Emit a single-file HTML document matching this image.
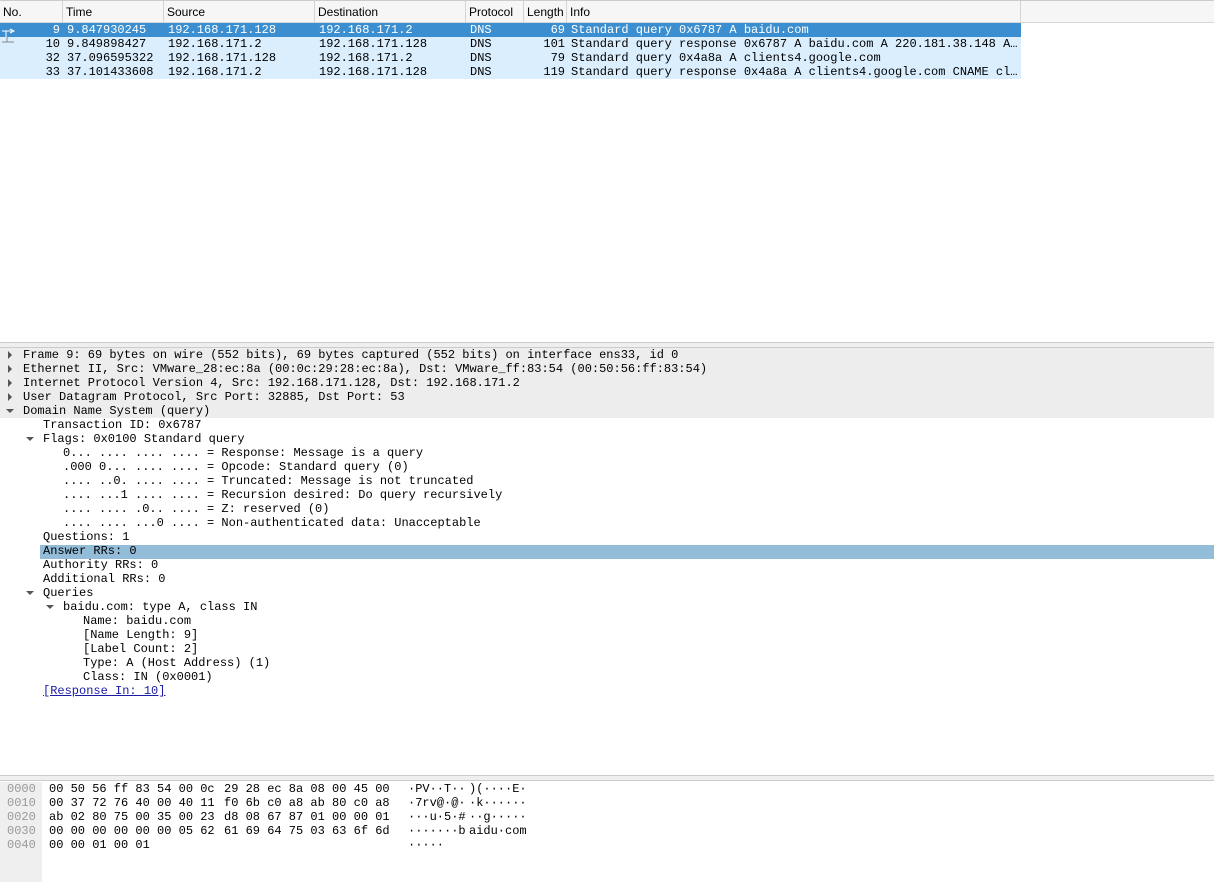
<!DOCTYPE html>
<html><head><meta charset="utf-8"><style>
*{margin:0;padding:0;box-sizing:border-box}
body{width:1214px;height:882px;background:#fff;position:relative;overflow:hidden;font-family:"Liberation Mono",monospace;font-size:12px;color:#000}
.a{position:absolute;white-space:pre;line-height:14px}
.hdr{position:absolute;left:0;top:0;width:1214px;height:23px;background:#f6f6f6;border-top:1px solid #ccc;border-bottom:1px solid #d8d8d8;font-family:"Liberation Sans",sans-serif;font-size:12px}
.hdr div{position:absolute;top:0;height:22px;line-height:22px;padding-left:3px;border-right:1px solid #d4d4d4}
.row{position:absolute;left:0;width:1021px;height:14px;background:#daeefe}
.sel{background:#3b8fd0;color:#fff}
.tl{position:absolute;left:0;width:1214px;height:14px;background:#ededed}
.tri{position:absolute;width:0;height:0}
.r{border-left:4px solid #555;border-top:4px solid transparent;border-bottom:4px solid transparent}
.d{border-top:4px solid #555;border-left:4px solid transparent;border-right:4px solid transparent}
.split{position:absolute;left:0;width:1214px;height:6px;background:#efefef;border-top:1px solid #ccc;border-bottom:1px solid #ccc}
.n{position:absolute;width:60px;text-align:right;left:0}
.l{position:absolute;width:565px;text-align:right;left:0}
</style></head><body>
<div class="hdr">
<div style="left:0;width:63px">No.</div>
<div style="left:63px;width:101px">Time</div>
<div style="left:164px;width:151px">Source</div>
<div style="left:315px;width:151px">Destination</div>
<div style="left:466px;width:58px">Protocol</div>
<div style="left:524px;width:43px">Length</div>
<div style="left:567px;width:454px">Info</div>
</div>
<div class="row sel" style="top:23px"></div>
<div class="row" style="top:37px"></div>
<div class="row" style="top:51px"></div>
<div class="row" style="top:65px"></div>
<svg style="position:absolute;left:0;top:26px" width="18" height="22"><path d="M2 5H12M6 5V11M10 3L14 5L10 7" stroke="#fff" fill="none"/><path d="M2 16H14M7 10V16" stroke="#888" fill="none"/></svg>

<div class="a" style="top:23px;left:0;width:1021px;height:14px;color:#fff"><span class="n">9</span><span style="position:absolute;left:67px">9.847930245</span><span style="position:absolute;left:168px">192.168.171.128</span><span style="position:absolute;left:319px">192.168.171.2</span><span style="position:absolute;left:470px">DNS</span><span class="l">69</span><span style="position:absolute;left:571px">Standard query 0x6787 A baidu.com</span></div>
<div class="a" style="top:37px;left:0;width:1021px;height:14px"><span class="n">10</span><span style="position:absolute;left:67px">9.849898427</span><span style="position:absolute;left:168px">192.168.171.2</span><span style="position:absolute;left:319px">192.168.171.128</span><span style="position:absolute;left:470px">DNS</span><span class="l">101</span><span style="position:absolute;left:571px">Standard query response 0x6787 A baidu.com A 220.181.38.148 A…</span></div>
<div class="a" style="top:51px;left:0;width:1021px;height:14px"><span class="n">32</span><span style="position:absolute;left:67px">37.096595322</span><span style="position:absolute;left:168px">192.168.171.128</span><span style="position:absolute;left:319px">192.168.171.2</span><span style="position:absolute;left:470px">DNS</span><span class="l">79</span><span style="position:absolute;left:571px">Standard query 0x4a8a A clients4.google.com</span></div>
<div class="a" style="top:65px;left:0;width:1021px;height:14px"><span class="n">33</span><span style="position:absolute;left:67px">37.101433608</span><span style="position:absolute;left:168px">192.168.171.2</span><span style="position:absolute;left:319px">192.168.171.128</span><span style="position:absolute;left:470px">DNS</span><span class="l">119</span><span style="position:absolute;left:571px">Standard query response 0x4a8a A clients4.google.com CNAME cl…</span></div>

<div class="split" style="top:342px"></div>
<div class="tl" style="top:348px"></div><div class="tl" style="top:362px"></div><div class="tl" style="top:376px"></div><div class="tl" style="top:390px"></div><div class="tl" style="top:404px"></div>
<div style="position:absolute;left:40px;top:545px;width:1174px;height:14px;background:#93bcd9"></div>
<div class="tri r" style="left:8px;top:351px"></div>
<div class="tri r" style="left:8px;top:365px"></div>
<div class="tri r" style="left:8px;top:379px"></div>
<div class="tri r" style="left:8px;top:393px"></div>
<div class="tri d" style="left:6px;top:409px"></div>
<div class="tri d" style="left:26px;top:437px"></div>
<div class="tri d" style="left:26px;top:591px"></div>
<div class="tri d" style="left:46px;top:605px"></div>
<div class="a" style="left:23px;top:348px">Frame 9: 69 bytes on wire (552 bits), 69 bytes captured (552 bits) on interface ens33, id 0
Ethernet II, Src: VMware_28:ec:8a (00:0c:29:28:ec:8a), Dst: VMware_ff:83:54 (00:50:56:ff:83:54)
Internet Protocol Version 4, Src: 192.168.171.128, Dst: 192.168.171.2
User Datagram Protocol, Src Port: 32885, Dst Port: 53
Domain Name System (query)</div>
<div class="a" style="left:43px;top:418px">Transaction ID: 0x6787
Flags: 0x0100 Standard query</div>
<div class="a" style="left:63px;top:446px">0... .... .... .... = Response: Message is a query
.000 0... .... .... = Opcode: Standard query (0)
.... ..0. .... .... = Truncated: Message is not truncated
.... ...1 .... .... = Recursion desired: Do query recursively
.... .... .0.. .... = Z: reserved (0)
.... .... ...0 .... = Non-authenticated data: Unacceptable</div>
<div class="a" style="left:43px;top:530px">Questions: 1
Answer RRs: 0
Authority RRs: 0
Additional RRs: 0
Queries</div>
<div class="a" style="left:63px;top:600px">baidu.com: type A, class IN</div>
<div class="a" style="left:83px;top:614px">Name: baidu.com
[Name Length: 9]
[Label Count: 2]
Type: A (Host Address) (1)
Class: IN (0x0001)</div>
<div class="a" style="left:43px;top:684px;color:#1a1aa6;text-decoration:underline">[Response In: 10]</div>
<div class="split" style="top:775px"></div>
<div style="position:absolute;left:0;top:782px;width:42px;height:100px;background:#efefef"></div>
<div class="a" style="left:7px;top:782px;color:#999">0000
0010
0020
0030
0040</div>
<div class="a" style="left:49px;top:782px">00 50 56 ff 83 54 00 0c
00 37 72 76 40 00 40 11
ab 02 80 75 00 35 00 23
00 00 00 00 00 00 05 62
00 00 01 00 01</div>
<div class="a" style="left:224px;top:782px">29 28 ec 8a 08 00 45 00
f0 6b c0 a8 ab 80 c0 a8
d8 08 67 87 01 00 00 01
61 69 64 75 03 63 6f 6d</div>
<div class="a" style="left:408px;top:782px">·PV··T··
·7rv@·@·
···u·5·#
·······b
·····</div>
<div class="a" style="left:469px;top:782px">)(····E·
·k······
··g·····
aidu·com</div>
</body></html>
